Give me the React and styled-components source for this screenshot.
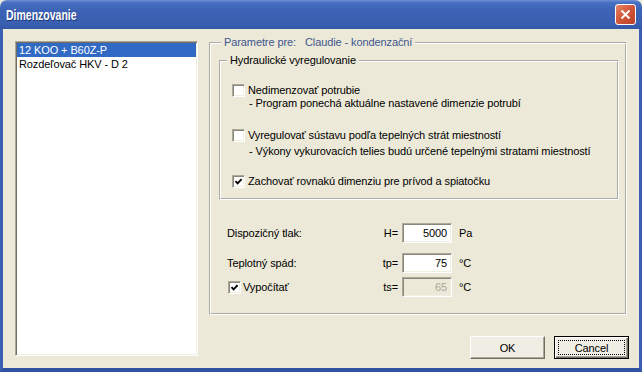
import React from 'react'
import styled, { createGlobalStyle } from 'styled-components'

const GlobalStyle = createGlobalStyle`
  html, body {
    margin: 0;
    padding: 0;
    background: #fff;
  }
  body {
    font-family: "Liberation Sans", Arial, sans-serif;
    font-size: 11px;
    letter-spacing: -0.1px;
    color: #000;
  }
`

const Window = styled.div`
  width: 642px;
  height: 372px;
  display: flex;
  flex-direction: column;
  background: #ece9d8;
  overflow: hidden;
`

const TitleBar = styled.div`
  height: 29px;
  flex: none;
  display: flex;
  align-items: center;
  justify-content: space-between;
  padding: 0 6px 0 6px;
  border-radius: 7px 7px 0 0;
  background: linear-gradient(to bottom, #6d8fd6 0%, #4870c2 9%, #3c63b6 35%, #3a5fb1 80%, #3458a7 100%);
`

const Title = styled.span`
  display: inline-block;
  font-family: "Liberation Sans", Arial, sans-serif;
  font-weight: bold;
  font-size: 14px;
  letter-spacing: 0;
  color: #fff;
  text-shadow: 1px 1px 0 #1c3474;
  margin-top: 1px;
  transform: scaleX(0.75);
  transform-origin: left center;
`

const CloseButton = styled.div`
  width: 21px;
  height: 21px;
  box-sizing: border-box;
  border: 1px solid #fff;
  border-radius: 3px;
  background: linear-gradient(135deg, #e8876a 0%, #d4583a 45%, #b8412a 100%);
  display: flex;
  align-items: center;
  justify-content: center;
`

const Frame = styled.div`
  flex: 1;
  display: flex;
  gap: 11px;
  padding: 7px 10px 0 12px;
  border-left: 3px solid #3b60b3;
  border-right: 3px solid #3b60b3;
  border-bottom: 4px solid #2f519f;
`

const ListBox = styled.div`
  width: 183px;
  height: 315px;
  margin-top: 5px;
  box-sizing: border-box;
  background: #fff;
  border-top: 1px solid #aca899;
  border-left: 1px solid #aca899;
  border-bottom: 1px solid #fff;
  border-right: 1px solid #fff;
  box-shadow: inset 1px 1px 0 #716f64, inset -1px -1px 0 #f1efe2;
  padding: 1px;
`

const ListItem = styled.div`
  height: 14px;
  line-height: 14px;
  padding-left: 2px;
  white-space: nowrap;
  background: ${p => (p.$selected ? '#316ac5' : 'transparent')};
  color: ${p => (p.$selected ? '#fff' : '#000')};
`

const RightColumn = styled.div`
  flex: 1;
  display: flex;
  flex-direction: column;
`

const OuterGroup = styled.fieldset`
  margin: 0 2px 0 0;
  border: 2px groove #fff;
  padding: 5px 6px 16px 8px;
  min-width: 0;
`

const OuterLegend = styled.legend`
  padding: 0 3px;
  margin-left: 2px;
  line-height: 13px;
  color: #41578e;
`

const LegendValue = styled.span`
  margin-left: 9px;
`

const InnerGroup = styled.fieldset`
  margin: 0;
  border: 2px groove #fff;
  padding: 17px 11px 10px 11px;
  min-width: 0;
`

const InnerLegend = styled.legend`
  padding: 0 3px;
  margin-left: -5px;
  line-height: 13px;
`

const Option = styled.div`
  display: flex;
  align-items: flex-start;
  gap: 3px;
  margin-top: ${p => p.$top || 0}px;
`

const OptionText = styled.div`
  line-height: 13px;
  white-space: nowrap;
`

const SubLine = styled.div`
  margin-top: ${p => p.$top || 0}px;
  padding-left: 1px;
`

const Box = styled.span`
  width: 13px;
  height: 13px;
  flex: none;
  box-sizing: border-box;
  display: inline-flex;
  align-items: center;
  justify-content: center;
  background: #fff;
  border-top: 1px solid #aca899;
  border-left: 1px solid #aca899;
  border-bottom: 1px solid #fff;
  border-right: 1px solid #fff;
  box-shadow: inset 1px 1px 0 #8a887c, inset -1px -1px 0 #f1efe2;
`

const FormRow = styled.div`
  display: grid;
  grid-template-columns: 120px 47px 50px auto;
  column-gap: 4px;
  align-items: center;
  height: 20px;
  padding-left: 8px;
  margin-top: ${p => p.$top}px;
`

const FieldLabel = styled.div`
  display: flex;
  align-items: center;
  gap: 2px;
  white-space: nowrap;
  margin-left: ${p => p.$shift || 0}px;
`

const Prefix = styled.div`
  text-align: right;
`

const Field = styled.div`
  height: 20px;
  box-sizing: border-box;
  line-height: 18px;
  text-align: right;
  padding-right: 4px;
  background: ${p => (p.$disabled ? '#ece9d8' : '#fff')};
  color: ${p => (p.$disabled ? '#aca899' : '#000')};
  border-top: 1px solid #aca899;
  border-left: 1px solid #aca899;
  border-bottom: 1px solid #fff;
  border-right: 1px solid #fff;
  box-shadow: inset 1px 1px 0 #8a887c, inset -1px -1px 0 #f1efe2;
`

const Unit = styled.div`
  padding-left: 3px;
`

const ButtonRow = styled.div`
  display: flex;
  justify-content: flex-end;
  gap: 9px;
  margin-top: 21px;
`

const Button = styled.div`
  position: relative;
  width: 75px;
  height: 23px;
  box-sizing: border-box;
  display: flex;
  align-items: center;
  justify-content: center;
  background: #efede4;
  border: 1px solid ${p => (p.$default ? '#000' : '#fff')};
  border-right-color: ${p => (p.$default ? '#000' : '#716f64')};
  border-bottom-color: ${p => (p.$default ? '#000' : '#716f64')};
  box-shadow: ${p =>
    p.$default
      ? 'inset 1px 1px 0 #fff, inset -1px -1px 0 #716f64, inset -2px -2px 0 #aca899'
      : 'inset -1px -1px 0 #aca899'};
  ${p =>
    p.$default &&
    `&::after {
      content: '';
      position: absolute;
      inset: 3px;
      border: 1px dotted #000;
    }`}
`

const CheckBox = ({ checked }) => (
  <Box>
    {checked && (
      <svg width="9" height="9" viewBox="0 0 9 9">
        <path d="M1.5 4.2 L3.6 6.4 L7.6 2.2" fill="none" stroke="#000" strokeWidth="1.9" />
      </svg>
    )}
  </Box>
)

export default function App() {
  return (
    <>
      <GlobalStyle />
      <Window>
        <TitleBar>
          <Title>Dimenzovanie</Title>
          <CloseButton>
            <svg width="13" height="13" viewBox="0 0 13 13">
              <path d="M2.5 2.5 L10.5 10.5 M10.5 2.5 L2.5 10.5" stroke="#fff" strokeWidth="2" />
            </svg>
          </CloseButton>
        </TitleBar>
        <Frame>
          <ListBox>
            <ListItem $selected>12 KOO + B60Z-P</ListItem>
            <ListItem>Rozdeľovač HKV - D 2</ListItem>
          </ListBox>
          <RightColumn>
            <OuterGroup>
              <OuterLegend>
                Parametre pre:<LegendValue>Claudie - kondenzační</LegendValue>
              </OuterLegend>
              <InnerGroup>
                <InnerLegend>Hydraulické vyregulovanie</InnerLegend>
                <Option>
                  <CheckBox />
                  <OptionText>
                    Nedimenzovať potrubie
                    <SubLine>- Program ponechá aktuálne nastavené dimenzie potrubí</SubLine>
                  </OptionText>
                </Option>
                <Option $top={19}>
                  <CheckBox />
                  <OptionText>
                    Vyregulovať sústavu podľa tepelných strát miestností
                    <SubLine $top={3}>- Výkony vykurovacích telies budú určené tepelnými stratami miestností</SubLine>
                  </OptionText>
                </Option>
                <Option $top={17}>
                  <CheckBox checked />
                  <OptionText>Zachovať rovnakú dimenziu pre prívod a spiatočku</OptionText>
                </Option>
              </InnerGroup>
              <FormRow $top={23}>
                <FieldLabel>Dispozičný tlak:</FieldLabel>
                <Prefix>H=</Prefix>
                <Field>5000</Field>
                <Unit>Pa</Unit>
              </FormRow>
              <FormRow $top={10}>
                <FieldLabel>Teplotný spád:</FieldLabel>
                <Prefix>tp=</Prefix>
                <Field>75</Field>
                <Unit>°C</Unit>
              </FormRow>
              <FormRow $top={4}>
                <FieldLabel $shift={1}>
                  <CheckBox checked />
                  Vypočítať
                </FieldLabel>
                <Prefix>ts=</Prefix>
                <Field $disabled>65</Field>
                <Unit>°C</Unit>
              </FormRow>
            </OuterGroup>
            <ButtonRow>
              <Button>OK</Button>
              <Button $default>Cancel</Button>
            </ButtonRow>
          </RightColumn>
        </Frame>
      </Window>
    </>
  )
}
